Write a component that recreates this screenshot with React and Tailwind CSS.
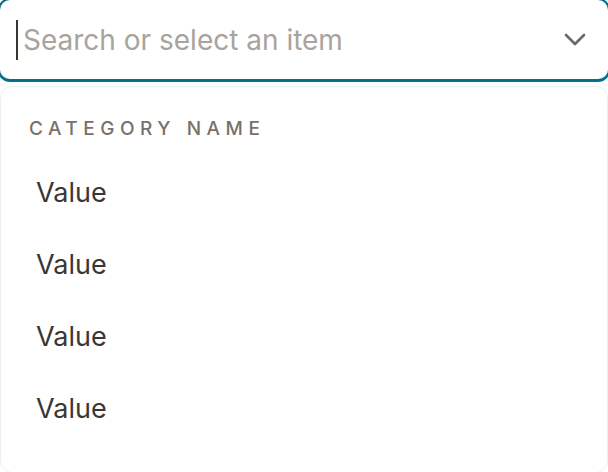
import React from 'react';

const items = ['Value', 'Value', 'Value', 'Value'];

export default function App() {
  return (
    <div className="relative h-[472px] w-full overflow-hidden bg-white" style={{ fontFamily: 'Inter, "Open Sans", sans-serif' }}>
      {/* Input */}
      <div className="mx-[-2px] mt-[-2px] flex h-[84px] items-center rounded-[12px] border-2 border-b-[3px] border-[#04718a] bg-white pl-[16px] pr-[21px]">
        <div className="h-[40px] w-[2px] bg-[#3b3530]" />
        <span className="ml-[5px] flex-1 text-[28px] text-[#a9a39d]">Search or select an item</span>
        <svg width="24" height="14" viewBox="0 0 24 14" fill="none" stroke="#6e6863" strokeWidth="2.6" strokeLinecap="round" strokeLinejoin="round">
          <polyline points="3,2 12,11 21,2" />
        </svg>
      </div>

      {/* Dropdown panel */}
      <div className="mt-[4px] h-[387px] rounded-[12px] border border-[#efefef] bg-white pt-[28px]">
        <div className="pl-[28px] text-[19px] font-medium uppercase tracking-[0.29em] text-[#77716b]">Category name</div>
        <div className="mt-[14px] flex flex-col">
          {items.map((v, i) => (
            <div key={i} className="flex h-[72px] items-center pl-[35px] text-[27px] text-[#3b3633]">
              {v}
            </div>
          ))}
        </div>
      </div>
    </div>
  );
}
